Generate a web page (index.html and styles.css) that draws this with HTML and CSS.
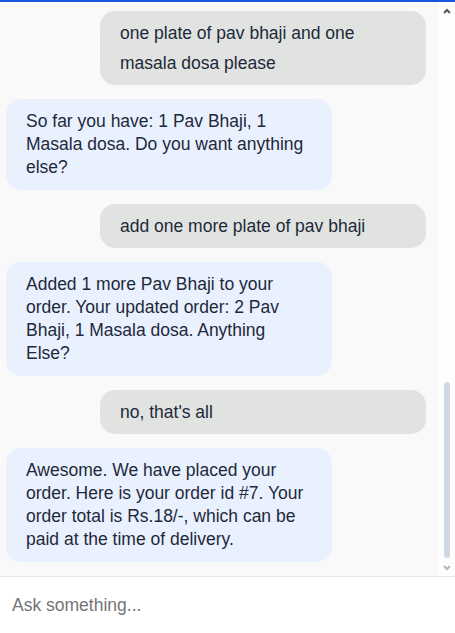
FILE: index.html
```html
<!DOCTYPE html>
<html lang="en">
<head>
<meta charset="utf-8">
<title>Order Chat</title>
<link rel="stylesheet" href="styles.css">
</head>
<body>
<div class="app">
  <div class="topbar"></div>
  <div class="main">
    <div class="chat">
      <div class="thread">
        <div class="msg user">one plate of pav bhaji and one masala dosa please</div>
        <div class="msg bot">So far you have: 1 Pav Bhaji, 1 Masala dosa. Do you want anything else?</div>
        <div class="msg user">add one more plate of pav bhaji</div>
        <div class="msg bot">Added 1 more Pav Bhaji to your order. Your updated order: 2 Pav Bhaji, 1 Masala dosa. Anything Else?</div>
        <div class="msg user">no, that's all</div>
        <div class="msg bot">Awesome. We have placed your order. Here is your order id #7. Your order total is Rs.18/-, which can be paid at the time of delivery.</div>
      </div>
    </div>
    <div class="scrollbar">
      <div class="sb-btn">
        <svg width="8" height="6" viewBox="0 0 8 6"><path d="M1 5 L4 2 L7 5" fill="none" stroke="#555" stroke-width="2"/></svg>
      </div>
      <div class="sb-track">
        <div class="sb-thumb"></div>
      </div>
      <div class="sb-btn">
        <svg width="8" height="6" viewBox="0 0 8 6"><path d="M1 1 L4 4 L7 1" fill="none" stroke="#b5b5b5" stroke-width="2"/></svg>
      </div>
    </div>
  </div>
  <div class="composer">
    <input class="ask" type="text" placeholder="Ask something...">
  </div>
</div>
</body>
</html>
```

FILE: styles.css
```css
html, body {
  margin: 0;
  padding: 0;
  height: 100%;
}

body {
  font-family: "Liberation Sans", Arial, sans-serif;
  font-size: 17.5px;
  color: #1e293b;
  background: #fff;
}

.app {
  height: 100vh;
  display: flex;
  flex-direction: column;
}

.topbar {
  height: 2px;
  flex: none;
  background: #1a56db;
}

.main {
  flex: 1;
  min-height: 0;
  display: flex;
}

.chat {
  flex: 1;
  min-width: 0;
  overflow: hidden;
  background: #f9f9f9;
  display: flex;
  flex-direction: column-reverse;
}

.thread {
  display: flex;
  flex-direction: column;
  gap: 14px;
  padding: 14px 12px 14px 6px;
}

.msg {
  width: 326px;
  box-sizing: border-box;
  border-radius: 15px;
}

.user {
  align-self: flex-end;
  background: #e1e3e0;
  line-height: 30px;
  padding: 7px 20px;
}

.bot {
  align-self: flex-start;
  background: #eaf1fe;
  line-height: 23px;
  padding: 11px 20px;
}

.scrollbar {
  width: 17px;
  flex: none;
  background: #fdfdfd;
  display: flex;
  flex-direction: column;
}

.sb-btn {
  height: 17px;
  flex: none;
  display: flex;
  align-items: center;
  justify-content: center;
}

.sb-track {
  flex: 1;
  display: flex;
  flex-direction: column;
  justify-content: flex-end;
  padding: 0 0 1px 6px;
}

.sb-thumb {
  width: 6px;
  height: 176px;
  border-radius: 3px;
  background: #cfd8e3;
}

.composer {
  flex: none;
  height: 56px;
  border-top: 1px solid #e5e5e5;
  display: flex;
  align-items: center;
  background: #fff;
}

.ask {
  flex: 1;
  border: none;
  outline: none;
  background: transparent;
  height: 100%;
  padding: 0 12px;
  font-family: "Liberation Sans", Arial, sans-serif;
  font-size: 17.5px;
  color: #1e293b;
}

.ask::placeholder {
  color: #757575;
}
```
